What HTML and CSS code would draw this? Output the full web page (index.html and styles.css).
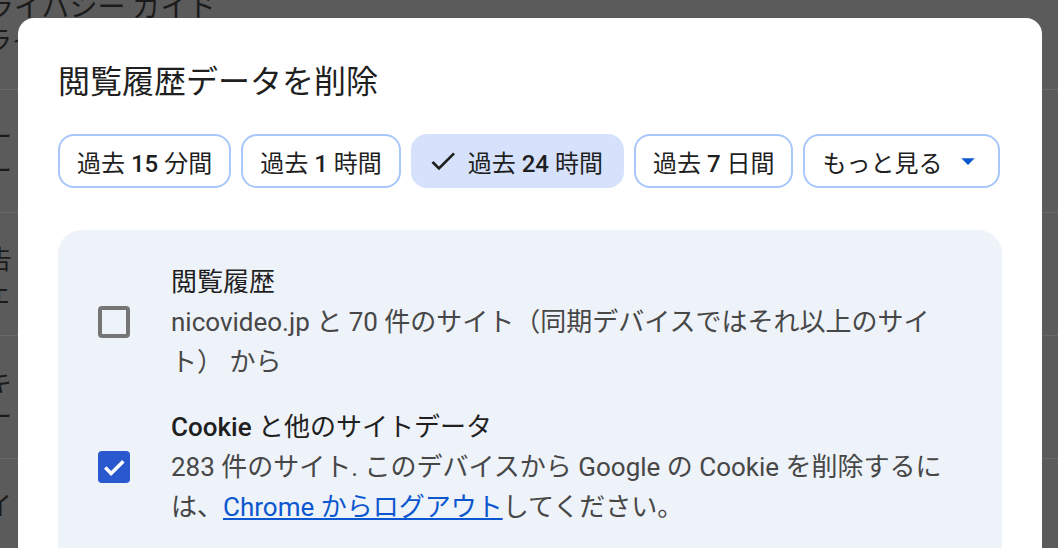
FILE: index.html
```html
<!doctype html>
<html lang="ja">
<head>
<meta charset="utf-8">
<title>閲覧履歴データを削除</title>
<link rel="stylesheet" href="styles.css">
</head>
<body>
<div class="page">
	<div class="page-head">
		<div class="page-title">ライバシー ガイド</div>
		<div class="page-sub">ライバシー設定を確認</div>
	</div>
	<div class="page-row">
		<p>ー</p>
		<p>ー</p>
	</div>
	<div class="page-row">
		<p>告</p>
		<p>ェ</p>
	</div>
	<div class="page-row">
		<p>キ</p>
		<p>ー</p>
	</div>
	<div class="page-row">
		<p>イ</p>
	</div>
</div>

<div class="dialog">
	<h1 class="dialog-title">閲覧履歴データを削除</h1>
	<div class="chips">
		<div class="chip"><span>過去 <b>15</b> 分間</span></div>
		<div class="chip"><span>過去 <b>1</b> 時間</span></div>
		<div class="chip chip-on">
			<svg class="chip-icon" viewBox="0 0 24 24"><path d="M9 16.17L4.83 12l-1.42 1.41L9 19 21 7l-1.41-1.41z"/></svg>
			<span>過去 <b>24</b> 時間</span>
		</div>
		<div class="chip"><span>過去 <b>7</b> 日間</span></div>
		<div class="chip chip-more">
			<span>もっと見る</span>
			<svg class="chip-arrow" viewBox="0 0 24 24"><path d="M7 10l5 5 5-5z"/></svg>
		</div>
	</div>

	<div class="card">
		<div class="item">
			<span class="box"></span>
			<div class="item-text">
				<div class="item-title">閲覧履歴</div>
				<div class="item-desc">nicovideo.jp と 70 件のサイト（同期デバイスではそれ以上のサイト） から</div>
			</div>
		</div>
		<div class="item">
			<span class="box box-on">
				<svg viewBox="0 0 24 24"><path d="M4.5 12.5l5 5L20 7"/></svg>
			</span>
			<div class="item-text">
				<div class="item-title"><b>Cookie</b> と他のサイトデータ</div>
				<div class="item-desc">283 件のサイト. このデバイスから Google の Cookie を削除するには、<a href="#">Chrome からログアウト</a>してください。</div>
			</div>
		</div>
	</div>
</div>
</body>
</html>
```

FILE: styles.css
```css
body,p,h1 { margin:0; padding:0;}
body { height:548px; overflow:hidden; position:relative; background:#5b5b5b; font-family:Roboto, "Noto Sans CJK JP", sans-serif; color:#1f1f1f;}

/* page behind the dialog */
.page { margin-left:-14px; color:#1b1b1b;}
.page-head { height:90px; border-bottom:1px solid #696969; box-sizing:border-box;}
.page-title { font-size:28px; line-height:16px;}
.page-sub { margin-top:8px; font-size:26px; line-height:34px;}
.page-row { height:123px; box-sizing:border-box; border-bottom:1px solid #696969; padding-top:30px; font-size:26px; line-height:34px;}

/* dialog */
.dialog { position:absolute; left:18px; top:18px; width:1024px; height:620px; box-sizing:border-box; padding:44px 40px 0; background:#fff; border-radius:16px;}
.dialog-title { font-size:32px; font-weight:400; line-height:40px; color:#1f1f1f;}

.chips { display:flex; gap:10px; margin-top:32px;}
.chip { display:flex; align-items:center; height:54px; box-sizing:border-box; padding:0 17px; border:2px solid #a8c7fa; border-radius:16px; font-size:24px; color:#1f1f1f; white-space:nowrap;}
.chip b { font-weight:500;}
.chip-on { background:#d6e2fb; border-color:#d6e2fb; padding:0 19px 0 14px;}
.chip-icon { width:32px; height:32px; margin-right:9px; fill:#1f1f1f;}
.chip-more { padding-right:14px;}
.chip-arrow { width:32px; height:32px; margin-left:10px; fill:#0b57d0;}

.card { margin-top:42px; height:400px; padding:32px 40px; background:#eef2f9; border-radius:24px;}
.item { display:flex; align-items:center; gap:41px;}
.item + .item { margin-top:25px;}
.box { flex:none; width:32px; height:32px; box-sizing:border-box; border:4px solid #757575; border-radius:4px;}
.box-on { display:flex; align-items:center; justify-content:center; background:#2a58cf; border-color:#2a58cf;}
.box-on svg { flex:none; width:28px; height:28px; fill:none; stroke:#fff; stroke-width:3;}
.item-text { width:792px; font-size:26px; line-height:40px;}
.item-title { color:#1f1f1f;}
.item-title b { font-weight:500;}
.item-desc { color:#474747;}
.item-desc a { color:#0b57d0; text-decoration:underline;}
```
